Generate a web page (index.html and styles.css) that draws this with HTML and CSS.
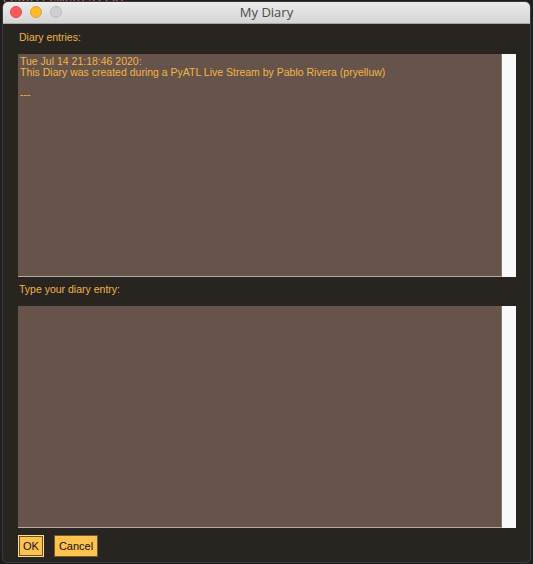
FILE: index.html
```html
<!DOCTYPE html>
<html>
<head>
<meta charset="utf-8">
<link rel="stylesheet" href="styles.css">
<title>My Diary</title>
</head>
<body>
<div class="desktop">
  <div class="backtext">requirements.txt</div>
  <div class="window">
    <div class="titlebar">
      <div class="lights">
        <span class="light red"></span>
        <span class="light yellow"></span>
        <span class="light gray"></span>
      </div>
      <div class="title">My Diary</div>
    </div>
    <div class="content">
      <div class="label first">Diary entries:</div>
      <div class="box box-top">
        <div class="area"><div class="line">Tue Jul 14 21:18:46 2020:</div><div class="line">This Diary was created during a PyATL Live Stream by Pablo Rivera (pryelluw)</div><div class="line">&nbsp;</div><div class="line">---</div></div>
        <div class="scroll"></div>
      </div>
      <div class="label second">Type your diary entry:</div>
      <div class="box box-bottom">
        <div class="area"></div>
        <div class="scroll"></div>
      </div>
      <div class="buttons">
        <button class="btn btn-ok">OK</button>
        <button class="btn btn-cancel">Cancel</button>
      </div>
    </div>
  </div>
</div>
</body>
</html>
```
FILE: styles.css
```css
html, body {
  margin: 0;
  padding: 0;
  background: #1e1e1e;
  width: 533px;
  height: 564px;
  overflow: hidden;
}
.desktop {
  position: relative;
  width: 533px;
  height: 564px;
  padding: 2px 0 0 3px;
  box-sizing: border-box;
}
.backtext {
  position: absolute;
  left: 2px;
  top: -9px;
  font-family: "Liberation Mono", monospace;
  font-size: 13px;
  color: #d0705a;
}
.window {
  position: relative;
  width: 527px;
  height: 560px;
  background: #282420;
  border-radius: 5px;
  overflow: hidden;
  box-shadow: 0 0 0 1px #3a3a3a;
  display: flex;
  flex-direction: column;
}
.titlebar {
  height: 21px;
  border-bottom: 1px solid #a9a9a9;
  background: linear-gradient(#ebebeb, #d5d5d5);
  position: relative;
  display: flex;
  align-items: center;
  justify-content: center;
  flex: none;
}
.lights {
  position: absolute;
  left: 7px;
  top: 4px;
  display: flex;
  gap: 8px;
}
.light {
  width: 12px;
  height: 12px;
  border-radius: 50%;
  box-sizing: border-box;
}
.red { background: #fc5b57; border: 1px solid #df4744; }
.yellow { background: #fdbb2e; border: 1px solid #de9f34; }
.gray { background: #cfcfcf; border: 1px solid #bcbcbc; }
.title {
  font-family: "Open Sans", "DejaVu Sans", sans-serif;
  font-size: 13px;
  color: #4a4a4a;
  line-height: 21px;
}
.content {
  padding: 0 11px 0 15px;
  display: flex;
  flex-direction: column;
  flex: 1;
}
.label {
  font-family: "Liberation Sans", Arial, sans-serif;
  font-size: 10.5px;
  color: #f1b449;
  line-height: 13px;
  box-sizing: border-box;
  padding-left: 1px;
}
.label.first { height: 30px; padding-top: 7px; }
.label.second { height: 29px; padding-top: 6px; }
.box {
  display: flex;
  width: 498px;
}
.box-top { height: 223px; }
.box-bottom { height: 222px; }
.area {
  flex: 1;
  background: #665349;
  border-bottom: 1px solid #b7aba3;
  border-right: 1px solid #85746a;
  padding: 2px 2px;
  font-family: "Liberation Sans", Arial, sans-serif;
  font-size: 10.5px;
  line-height: 11px;
  color: #f4b548;
}
.line { white-space: pre; }
.scroll {
  width: 14px;
  background: #f9f9f9;
}
.buttons {
  display: flex;
  gap: 10px;
  margin-top: 7px;
}
.btn {
  height: 22px;
  margin: 0;
  padding: 0 5px;
  background: #ffc24f;
  border: 1px solid #6f5a2a;
  border-radius: 0;
  font-family: "Liberation Sans", Arial, sans-serif;
  font-size: 11px;
  color: #111;
  box-sizing: border-box;
}
.btn-ok {
  width: 26px;
  padding: 0;
  border: 1px solid #ffe089;
  box-shadow: inset 0 0 0 1px #6a5420;
}
.btn-cancel { width: 44px; padding: 0; }
```
